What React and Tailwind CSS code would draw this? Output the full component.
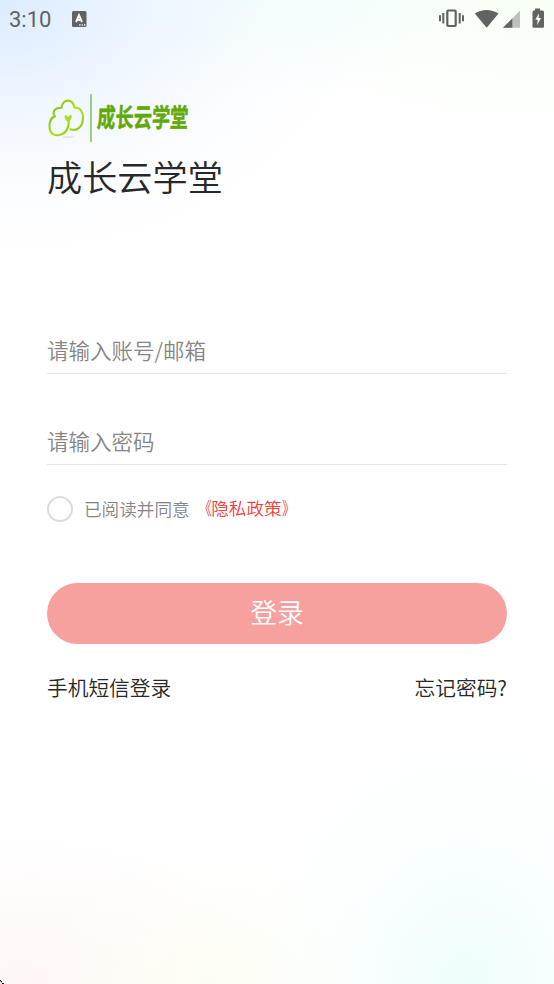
import { useState } from "react";

function StatusBar() {
  return (
    <div className="flex h-[38px] items-center justify-between px-[9px] text-[#5f6362]">
      <div className="flex items-center">
        <span className="w-[62px] pt-0.5 font-[Roboto,sans-serif] text-[22px] font-normal leading-[36px]">3:10</span>
        <svg width="16" height="17" viewBox="0 0 16 17">
          <rect x="1" y="0" width="14.500" height="16" rx="1.500" fill="currentColor" />
          <path d="M5 11 L8 4.200 L11 11 M6 9 H10" fill="none" stroke="#f4f9ff" strokeWidth="2" />
          <path d="M8.200 14h1.300M10.600 14h1.300M13 14h1.300" stroke="#f4f9ff" strokeWidth="1.300" />
        </svg>
      </div>
      <svg width="108" height="24" viewBox="0 0 108 24" fill="currentColor">
        {/* vibrate */}
        <rect x="10.300" y="3.500" width="8.400" height="15.500" rx="1" fill="none" stroke="currentColor" strokeWidth="2.200" />
        <path d="M3 8.200v6M6.300 6v10.500M22.700 6v10.500M26 8.200v6" stroke="currentColor" strokeWidth="2" />
        {/* wifi */}
        <path d="M37.800 6.500 C44.500 1.800 54.500 1.800 61.500 6.500 L49.700 20.800 Z" />
        {/* signal */}
        <path d="M66 20.800 L83 3.800 V20.800 Z" opacity="0.4" />
        <path d="M66 20.800 L75.300 11.500 V20.800 Z" />
        {/* battery */}
        <path d="M98 1.500h5v2h2.500q1.500 0 1.500 1.500V19.500q0 1.300-1.500 1.300h-8.500q-1.500 0-1.500-1.300V5Q95.500 3.500 97 3.500h1z" />
        <path d="M102 6.200 L98.300 12.800 H100.800 L100 18.200 L104 11 H101.600 Z" fill="#f8fff9" />
      </svg>
    </div>
  );
}

function Logo() {
  return (
    <svg width="144" height="49" viewBox="21 27 432 147" fill="none">
      <defs>
        <linearGradient id="leaf" x1="0" y1="0" x2="1" y2="1">
          <stop offset="0" stopColor="#7cbd1c" />
          <stop offset="0.5" stopColor="#b4e31e" />
          <stop offset="1" stopColor="#8fcb18" />
        </linearGradient>
      </defs>
      <ellipse cx="86" cy="156" rx="20" ry="3.500" fill="#e4e7e8" />
      <path
        d="M45 94 C31 97 27 115 29 130 C31 147 44 153 58 150 C78 146 88 128 86 106"
        stroke="url(#leaf)" strokeWidth="6.500" strokeLinecap="round"
      />
      <path
        d="M43 93 C36 78 48 66 64 69 C66 55 75 47 84 47 C94 47 101 55 104 68 C120 66 129 80 129 98 C129 124 112 140 91 133"
        stroke="url(#leaf)" strokeWidth="6.500" strokeLinecap="round" strokeLinejoin="round"
      />
      <path d="M85 112 C75 104 71 95 76 91 C80 89 84 93 85 97 C87 91 91 88 94 91 C98 97 92 106 85 112 Z" fill="#aedb20" />
      <path d="M153 27 V171" stroke="#8cc665" strokeWidth="5" />
      <text
        transform="translate(170 125) skewX(-3) scale(0.73 1.04)"
        fontFamily="'Noto Sans CJK SC', sans-serif"
        fontWeight="700"
        fontSize="75"
        fill="#62a908"
        stroke="#62a908"
        strokeWidth="1.500"
        strokeLinejoin="round"
      >
        成长云学堂
      </text>
    </svg>
  );
}

export default function App() {
  const [agreed, setAgreed] = useState(false);

  return (
    <div className="relative h-[984px] w-[554px] overflow-hidden bg-white bg-[radial-gradient(ellipse_380px_270px_at_0%_0%,#dcebff_0%,#e9f3ffb0_40%,#f7faff60_72%,#ffffff00_100%),radial-gradient(ellipse_230px_100px_at_45%_0%,#f0fefd_0%,#ffffff00_100%),radial-gradient(ellipse_300px_140px_at_95%_0%,#f7fff6_0%,#ffffff00_100%),radial-gradient(ellipse_210px_250px_at_84%_100%,#eefdfd_0%,#f4fffe90_50%,#ffffff00_100%),radial-gradient(ellipse_190px_130px_at_38%_100%,#fdfef3_0%,#ffffff00_100%),radial-gradient(ellipse_240px_150px_at_6%_100%,#fff6f6_0%,#ffffff00_100%)] font-['Noto_Sans_CJK_SC',sans-serif] font-[350]">
      <StatusBar />

      <main className="px-[47px] pt-14">
        <Logo />
        <h1 className="mt-2 text-[35.200px] leading-[50px] text-[#282828]">成长云学堂</h1>

        <form className="mt-[127px]" onSubmit={(e) => e.preventDefault()}>
          <input
            type="text"
            placeholder="请输入账号/邮箱"
            className="block h-[46px] w-full border-b-[1.500px] border-[#e5e5e5] bg-transparent pb-0.5 text-[21.500px] text-[#282828] outline-none placeholder:text-[#858585]"
          />
          <input
            type="password"
            placeholder="请输入密码"
            className="mt-[45px] block h-[46px] w-full border-b-[1.500px] border-[#e5e5e5] bg-transparent pb-0.5 text-[21.500px] text-[#282828] outline-none placeholder:text-[#858585]"
          />

          <div className="mt-[31px] flex h-[26px] items-center">
            <button
              type="button"
              aria-pressed={agreed}
              onClick={() => setAgreed(!agreed)}
              className={`size-[26px] rounded-full border-2 ${agreed ? "border-[#f04040] bg-[#f04040]" : "border-[#dcdcdc]"}`}
            />
            <span className="ml-[11px] text-[17.600px] leading-[26px] text-[#858585]">已阅读并同意</span>
            <a href="#" className="ml-1 flex pb-[3px] text-[17.600px] leading-[23px] text-[#f04040]">
              <span className="origin-right scale-x-75">《</span>
              隐私政策
              <span className="origin-left scale-x-75">》</span>
            </a>
          </div>

          <button type="submit" className="mt-[61px] flex h-[61px] w-full items-center justify-center rounded-full bg-[#f7a19f] pb-0.5 text-[26.800px] text-white">
            登录
          </button>
        </form>

        <div className="mt-[28px] flex justify-between text-[20.700px] leading-[30px] text-[#282828]">
          <a href="#">手机短信登录</a>
          <a href="#">忘记密码?</a>
        </div>
      </main>

      {/* Corner nick at the bottom left */}
      <svg className="absolute bottom-0 left-0" width="4" height="4" viewBox="0 0 4 4" shapeRendering="crispEdges">
        <path d="M0 0h1v1H0zM1 1h1v1H1zM2 3h2v1H2z" fill="#000" />
        <path d="M0 1h1v1H0zM1 2h1v1H1z" fill="#999" />
      </svg>
    </div>
  );
}
